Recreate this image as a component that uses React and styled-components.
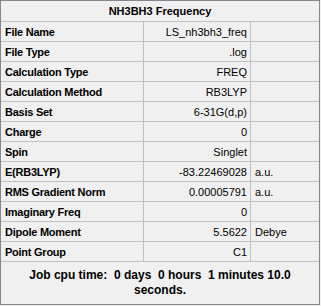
import React from "react";
import styled, { createGlobalStyle } from "styled-components";

const GlobalStyle = createGlobalStyle`
  html, body {
    margin: 0;
    padding: 0;
    background: #f0f0f0;
  }
  body {
    font-family: "Liberation Sans", Arial, sans-serif;
    font-size: 11px;
    color: #000;
  }
`;

const Frame = styled.div`
  width: 320px;
  height: 305px;
  box-sizing: border-box;
  border: 1px solid #828790;
  background: #f0f0f0;
  display: flex;
  flex-direction: column;
`;

const Title = styled.div`
  height: 21px;
  box-sizing: border-box;
  border-bottom: 1px solid #c0c0c0;
  display: flex;
  align-items: center;
  justify-content: center;
  font-weight: bold;
`;

const Grid = styled.div`
  display: grid;
  grid-template-columns: 143px 107px 1fr;
  grid-auto-rows: 20px;
`;

const Cell = styled.div`
  box-sizing: border-box;
  border-bottom: 1px solid #c0c0c0;
  border-right: ${(p) => (p.$last ? "none" : "1px solid #c0c0c0")};
  display: flex;
  align-items: center;
  padding: 0 ${(p) => (p.$align === "right" ? "3px" : "4px")};
  justify-content: ${(p) => (p.$align === "right" ? "flex-end" : "flex-start")};
  font-weight: ${(p) => (p.$bold ? "bold" : "normal")};
  letter-spacing: ${(p) => (p.$bold ? "-0.25px" : "0")};
  white-space: nowrap;
`;

const Footer = styled.div`
  flex: 1;
  padding-top: 6px;
  text-align: center;
  font-weight: bold;
  font-size: 12px;
  line-height: 15px;
  white-space: pre;
`;

const rows = [
  ["File Name", "LS_nh3bh3_freq", ""],
  ["File Type", ".log", ""],
  ["Calculation Type", "FREQ", ""],
  ["Calculation Method", "RB3LYP", ""],
  ["Basis Set", "6-31G(d,p)", ""],
  ["Charge", "0", ""],
  ["Spin", "Singlet", ""],
  ["E(RB3LYP)", "-83.22469028", "a.u."],
  ["RMS Gradient Norm", "0.00005791", "a.u."],
  ["Imaginary Freq", "0", ""],
  ["Dipole Moment", "5.5622", "Debye"],
  ["Point Group", "C1", ""],
];

export default function App() {
  return (
    <>
      <GlobalStyle />
      <Frame>
        <Title>NH3BH3 Frequency</Title>
        <Grid>
          {rows.map(([label, value, unit]) => (
            <React.Fragment key={label}>
              <Cell $bold>{label}</Cell>
              <Cell $align="right">{value}</Cell>
              <Cell $last>{unit}</Cell>
            </React.Fragment>
          ))}
        </Grid>
        <Footer>
          {"Job cpu time:  0 days  0 hours  1 minutes 10.0"}
          <br />
          {"seconds."}
        </Footer>
      </Frame>
    </>
  );
}
